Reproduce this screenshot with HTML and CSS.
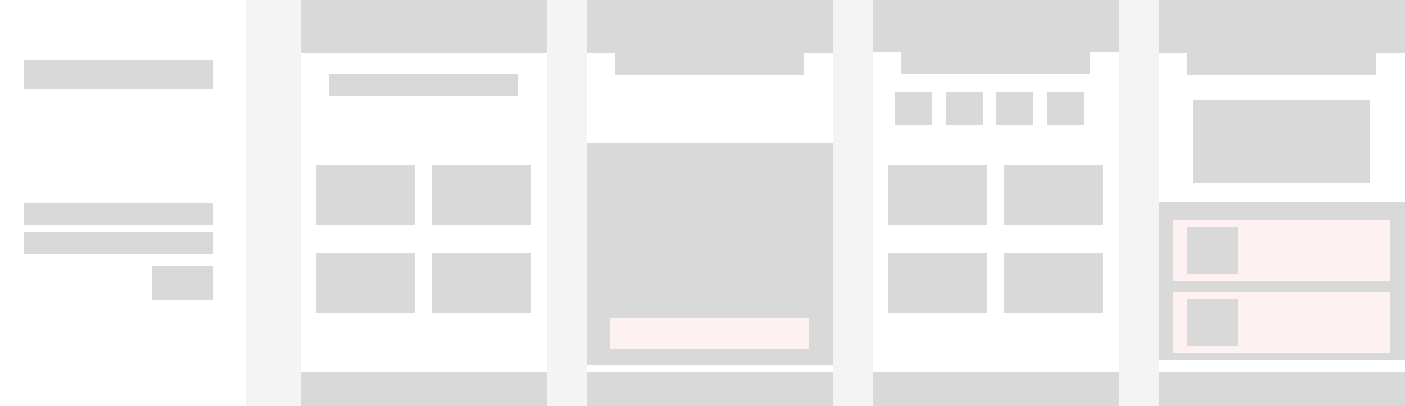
FILE: index.html
```html
<!DOCTYPE html>
<html>
<head>
<meta charset="utf-8">
<link rel="stylesheet" href="styles.css">
</head>
<body>
<div class="page">
  <aside class="side">
    <div class="side-title"></div>
    <div class="side-form">
      <div class="side-line"></div>
      <div class="side-line"></div>
      <div class="side-btn"></div>
    </div>
  </aside>

  <div class="gutter gutter-first"></div>
  <section class="panel">
    <div class="p-head"></div>
    <div class="p-title p1-title"></div>
    <div class="cells">
      <div class="cell"></div><div class="cell"></div>
      <div class="cell"></div><div class="cell"></div>
    </div>
    <div class="p-foot"></div>
  </section>

  <div class="gutter"></div>
  <section class="panel">
    <div class="p-head"></div>
    <div class="p-title"></div>
    <div class="hero">
      <div class="hero-cta"></div>
    </div>
    <div class="p-foot"></div>
  </section>

  <div class="gutter"></div>
  <section class="panel">
    <div class="p-head p-head-52"></div>
    <div class="p-title"></div>
    <div class="icons">
      <div class="icon"></div><div class="icon"></div><div class="icon"></div><div class="icon"></div>
    </div>
    <div class="cells cells-p3">
      <div class="cell"></div><div class="cell"></div>
      <div class="cell"></div><div class="cell"></div>
    </div>
    <div class="p-foot"></div>
  </section>

  <div class="gutter"></div>
  <section class="panel">
    <div class="p-head"></div>
    <div class="p-title"></div>
    <div class="media"></div>
    <div class="list">
      <div class="row"><div class="thumb"></div></div>
      <div class="row"><div class="thumb"></div></div>
    </div>
    <div class="p-foot"></div>
  </section>
</div>
</body>
</html>
```

FILE: styles.css
```css
* { box-sizing: border-box; }
html, body { margin: 0; padding: 0; background: #ffffff; }
.page { display: flex; height: 406px; width: 1405px; overflow: hidden; }

.side { width: 246px; flex: none; padding: 60px 33px 0 24px; display: flex; flex-direction: column; }
.side-title { height: 29px; background: #d9d9d9; }
.side-form { margin-top: 114px; display: flex; flex-direction: column; gap: 7px; }
.side-line { height: 22px; background: #d9d9d9; }
.side-btn { width: 61px; height: 34px; margin-top: 5px; align-self: flex-end; background: #d9d9d9; }

.gutter { width: 40px; flex: none; background: #f4f4f4; }
.gutter-first { width: 55px; }

.panel { width: 246px; flex: none; height: 406px; display: flex; flex-direction: column; background: #ffffff; }
.p-head { height: 53px; background: #d9d9d9; flex: none; }
.p-head-52 { height: 52px; }
.p-title { height: 22px; width: 189px; margin-left: 28px; background: #d9d9d9; flex: none; }
.p1-title { margin-top: 21px; }
.p-foot { height: 34px; margin-top: auto; background: #d9d9d9; flex: none; }

.cells { display: grid; grid-template-columns: 99px 99px; grid-auto-rows: 60px; column-gap: 17px; row-gap: 28px; padding-left: 15px; margin-top: 69px; }
.cells-p3 { margin-top: 40px; }
.cell { background: #d9d9d9; }

.hero { margin-top: 68px; height: 222px; background: #d9d9d9; padding: 175px 24px 0 23px; }
.hero-cta { height: 31px; background: #fdf2f1; }

.icons { display: flex; justify-content: space-between; width: 189px; margin: 18px 0 0 22px; }
.icon { width: 37px; height: 33px; background: #d9d9d9; }

.media { width: 177px; height: 83px; margin: 25px 0 0 34px; background: #d9d9d9; }
.list { margin-top: 19px; background: #d9d9d9; padding: 18px 15px 7px 14px; display: flex; flex-direction: column; gap: 11px; }
.row { height: 61px; background: #fdf2f1; padding: 7px 0 0 14px; }
.thumb { width: 51px; height: 47px; background: #d9d9d9; }
```
